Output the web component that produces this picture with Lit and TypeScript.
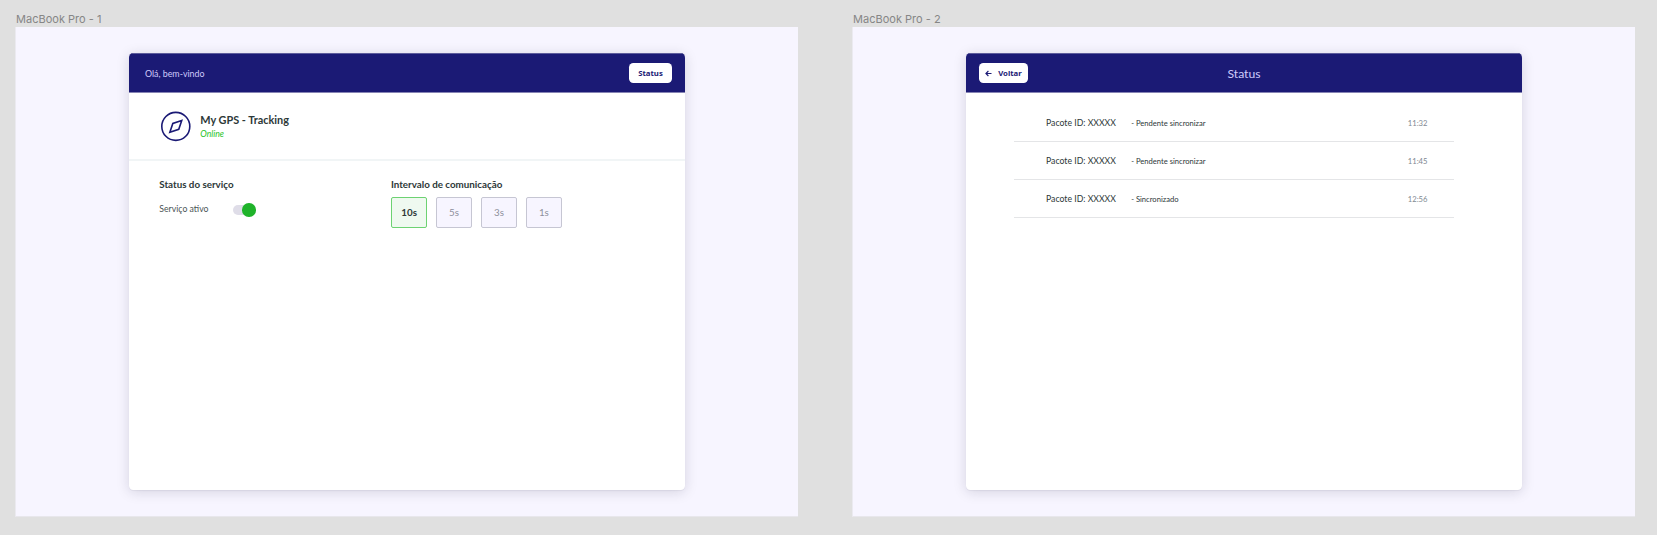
import { LitElement, html, css } from "lit";
import { customElement, property } from "lit/decorators.js";

const intervals = ["10s", "5s", "3s", "1s"];

const packages = [
  { id: "XXXXX", state: "Pendente sincronizar", time: "11:32" },
  { id: "XXXXX", state: "Pendente sincronizar", time: "11:45" },
  { id: "XXXXX", state: "Sincronizado", time: "12:56" },
];

@customElement("app-frame")
class AppFrame extends LitElement {
  @property() name = "";

  static styles = css`
    :host { display: block; width: 783px; }
    .name {
      height: 27px; box-sizing: border-box; padding: 12px 0 0 1px;
      font: 400 11px/14px Inter, sans-serif; letter-spacing: 0.02px; color: #868686; white-space: nowrap;
    }
    .board {
      height: 490px; box-sizing: border-box; padding: 26px 113px;
      border-left: 1px solid #ebeaf0; border-bottom: 1px solid #e8e7ec; background: #f7f5ff;
    }
    .card {
      height: 437.4px; border-radius: 4.4px; background: #fff; overflow: hidden;
      box-shadow: 0 1px 1px rgba(20, 20, 50, 0.05), 0 2px 13px rgba(20, 20, 50, 0.15);
    }
  `;

  render() {
    return html`
      <div class="name">${this.name}</div>
      <div class="board"><div class="card"><slot></slot></div></div>
    `;
  }
}

@customElement("tracking-screen")
class TrackingScreen extends LitElement {
  static styles = css`
    :host { display: block; font-family: Lato, sans-serif; color: #2d3838; }
    .bar {
      height: 40px; box-sizing: border-box; padding: 0 13px 0 16px; background: #1b1a75;
      border-top: 1px solid #5d5c9c; border-bottom: 1px solid #8684b4;
      display: flex; align-items: center; justify-content: space-between;
    }
    .hello { font-size: 8.85px; line-height: 12px; padding-top: 2px; color: #cfcbfb; }
    .btn {
      width: 43px; height: 19.2px; border: 0; padding: 0; border-radius: 4.4px; background: #fff;
      font: 700 7.75px/19px "Noto Sans", sans-serif; color: #1b1a75; text-align: center;
    }
    .device {
      height: 68px; box-sizing: border-box; padding-left: 29.5px; border-bottom: 2px solid #f1f5f6;
      display: flex; align-items: center; gap: 8.2px;
    }
    .compass { display: block; width: 33.6px; height: 33.6px; padding-top: 0.6px; }
    .title { font-size: 10.9px; line-height: 13px; font-weight: 700; }
    .online { margin-top: 2px; font-size: 8.7px; line-height: 12px; font-style: italic; color: #1fc427; }
    .settings { display: grid; grid-template-columns: 231.6px 1fr; padding: 17px 30.3px; }
    .heading { font-size: 9.8px; line-height: 13px; font-weight: 700; }
    .service { display: flex; align-items: center; margin-top: 12px; height: 14px; }
    .label { width: 73.8px; font-size: 8.7px; line-height: 12px; padding-bottom: 2px; color: #4a5355; }
    .toggle {
      width: 22.6px; height: 10px; border-radius: 5px; background: #dfdde8;
      display: flex; align-items: center; justify-content: flex-end;
    }
    .knob { width: 13.6px; height: 13.6px; border-radius: 50%; background: #1fb32a; flex: none; }
    .choices { display: flex; gap: 8.3px; margin-top: 6px; }
    .choice {
      width: 36.6px; height: 30.8px; box-sizing: border-box; border: 1px solid #c6c6d3; border-radius: 2px;
      background: #f7f5ff; color: #8d8f9c; font: 400 9.8px/29px Lato, sans-serif; text-align: center; padding: 0;
    }
    .choice.on { border-color: #6dd272; background: #eff9f0; color: #2d3838; font-weight: 700; }
  `;

  render() {
    return html`
      <div class="bar">
        <span class="hello">Olá, bem-vindo</span>
        <button class="btn">Status</button>
      </div>
      <div class="device">
        <svg class="compass" viewBox="0 0 24 24" fill="none" stroke="#1b1a75" stroke-width="1.15">
          <circle cx="12" cy="12" r="10"></circle>
          <polygon points="16.24 7.76 14.12 14.12 7.76 16.24 9.88 9.88"></polygon>
        </svg>
        <div>
          <div class="title">My GPS - Tracking</div>
          <div class="online">Online</div>
        </div>
      </div>
      <div class="settings">
        <div>
          <div class="heading">Status do serviço</div>
          <div class="service">
            <span class="label">Serviço ativo</span>
            <span class="toggle"><span class="knob"></span></span>
          </div>
        </div>
        <div>
          <div class="heading">Intervalo de comunicação</div>
          <div class="choices">
            ${intervals.map((v, i) => html`<button class="choice ${i === 0 ? "on" : ""}">${v}</button>`)}
          </div>
        </div>
      </div>
    `;
  }
}

@customElement("status-screen")
class StatusScreen extends LitElement {
  static styles = css`
    :host { display: block; font-family: Lato, sans-serif; color: #2d3838; }
    .bar {
      height: 40px; box-sizing: border-box; padding: 0 12.6px; background: #1b1a75;
      border-top: 1px solid #5d5c9c; border-bottom: 1px solid #8684b4;
      display: grid; grid-template-columns: 1fr auto 1fr; align-items: center;
    }
    .back {
      width: 49.6px; height: 19.2px; border: 0; border-radius: 4.4px; background: #fff; padding: 0 0 0 6.6px;
      display: flex; align-items: center; gap: 6px;
      font: 700 7.75px/19px "Noto Sans", sans-serif; color: #1b1a75;
    }
    .arrow { width: 7px; height: 7px; flex: none; }
    .title { font-size: 12.2px; line-height: 16px; padding-top: 2px; color: #cfcbfb; }
    .list { padding: 11px 0 0 48px; width: 440px; }
    .row {
      height: 38px; box-sizing: border-box; border-bottom: 1px solid #e4e5e7; padding: 0 26.6px 0 32px;
      display: flex; align-items: center;
    }
    .id { width: 85.2px; font-size: 8.7px; }
    .state { flex: 1; font-size: 7.6px; }
    .time { font-size: 7.65px; color: #808892; }
  `;

  render() {
    return html`
      <div class="bar">
        <button class="back">
          <svg class="arrow" viewBox="0 0 7 7" fill="none" stroke="#1b1a75" stroke-width="1.1">
            <path d="M6.5 3.5H.9M3.4 1L.9 3.5L3.4 6"></path>
          </svg>
          Voltar
        </button>
        <span class="title">Status</span>
      </div>
      <div class="list">
        ${packages.map((p) => html`
          <div class="row">
            <span class="id">Pacote ID: ${p.id}</span>
            <span class="state">- ${p.state}</span>
            <span class="time">${p.time}</span>
          </div>
        `)}
      </div>
    `;
  }
}

@customElement("app-root")
class AppRoot extends LitElement {
  static styles = css`
    :host {
      display: flex; gap: 54px; width: 1657px; height: 535px; box-sizing: border-box;
      padding-left: 15px; background: #e0e0e0; overflow: hidden;
    }
  `;

  render() {
    return html`
      <app-frame name="MacBook Pro - 1"><tracking-screen></tracking-screen></app-frame>
      <app-frame name="MacBook Pro - 2"><status-screen></status-screen></app-frame>
    `;
  }
}
